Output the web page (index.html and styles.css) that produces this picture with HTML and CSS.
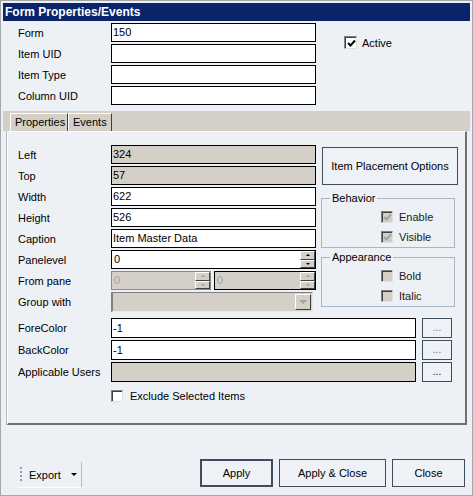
FILE: index.html
```html
<!DOCTYPE html>
<html lang="en">
<head>
    <meta charset="UTF-8">
    <title>Form Properties/Events</title>
    <link rel="stylesheet" href="styles.css">
</head>
<body>
    <div class="window">
        <div class="titlebar">Form Properties/Events</div>

        <div class="header">
            <div class="fields">
                <span>Form</span><div class="textbox">150</div>
                <span>Item UID</span><div class="textbox"></div>
                <span>Item Type</span><div class="textbox"></div>
                <span>Column UID</span><div class="textbox"></div>
            </div>
            <label class="check active-check">
                <span class="box">
                    <svg width="9" height="9" viewBox="0 0 9 9"><path d="M1 4 L3.5 6.5 L8 1.5" fill="none" stroke="#000" stroke-width="2"/></svg>
                </span>
                Active
            </label>
        </div>

        <div class="tab-strip">
            <span class="tab selected">Properties</span>
            <span class="tab">Events</span>
        </div>

        <div class="tab-panel">
            <div class="panel-top">
                <div class="fields props">
                    <span>Left</span><div class="textbox disabled">324</div>
                    <span>Top</span><div class="textbox disabled">57</div>
                    <span>Width</span><div class="textbox">622</div>
                    <span>Height</span><div class="textbox">526</div>
                    <span>Caption</span><div class="textbox">Item Master Data</div>
                    <span>Panelevel</span>
                    <div class="spin">
                        <span class="spin-value">0</span>
                        <span class="spin-buttons"><i class="up"></i><i class="down"></i></span>
                    </div>
                    <span>From pane</span>
                    <div class="pane-pair">
                        <div class="spin disabled small">
                            <span class="spin-value">0</span>
                            <span class="spin-buttons"><i class="up"></i><i class="down"></i></span>
                        </div>
                        <div class="spin disabled small dark">
                            <span class="spin-value">0</span>
                            <span class="spin-buttons"><i class="up"></i><i class="down"></i></span>
                        </div>
                    </div>
                    <span>Group with</span>
                    <div class="combo">
                        <span class="combo-value"></span>
                        <span class="combo-button"><i class="down"></i></span>
                    </div>
                </div>

                <div class="side">
                    <button class="btn placement">Item Placement Options</button>
                    <fieldset class="group behavior">
                        <legend>Behavior</legend>
                        <div class="check-list">
                            <label class="check off">
                                <span class="box">
                                    <svg width="9" height="9" viewBox="0 0 9 9"><path d="M1 4 L3.5 6.5 L8 1.5" fill="none" stroke="#a4a4a4" stroke-width="2"/></svg>
                                </span>
                                Enable
                            </label>
                            <label class="check off">
                                <span class="box">
                                    <svg width="9" height="9" viewBox="0 0 9 9"><path d="M1 4 L3.5 6.5 L8 1.5" fill="none" stroke="#a4a4a4" stroke-width="2"/></svg>
                                </span>
                                Visible
                            </label>
                        </div>
                    </fieldset>
                    <fieldset class="group appearance">
                        <legend>Appearance</legend>
                        <div class="check-list">
                            <label class="check off"><span class="box"></span>Bold</label>
                            <label class="check off"><span class="box"></span>Italic</label>
                        </div>
                    </fieldset>
                </div>
            </div>

            <div class="color-rows">
                <span>ForeColor</span><div class="textbox">-1</div><button class="btn dots">...</button>
                <span>BackColor</span><div class="textbox">-1</div><button class="btn dots">...</button>
                <span>Applicable Users</span><div class="textbox disabled"></div><button class="btn dots dark">...</button>
            </div>

            <label class="check exclude"><span class="box"></span>Exclude Selected Items</label>
        </div>

        <div class="footer">
            <div class="export">
                <span class="grip"></span>
                <span class="export-label">Export</span>
                <span class="caret"></span>
            </div>
            <button class="btn action default">Apply</button>
            <button class="btn action wide">Apply &amp; Close</button>
            <button class="btn action">Close</button>
        </div>
    </div>
</body>
</html>
```

FILE: styles.css
```css
body {
    margin: 0;
    font-family: "Liberation Sans", Arial, sans-serif;
    font-size: 11px;
    color: #000000;
    background: #ffffff;
}

.window {
    width: 473px;
    height: 496px;
    box-sizing: border-box;
    border: 1px solid #a4a8ac;
    padding: 2px;
    background-color: #edf1f5;
    display: flex;
    flex-direction: column;
}

.titlebar {
    height: 18px;
    line-height: 18px;
    padding-left: 2px;
    background-color: #0a246a; /* Classic navy caption */
    color: #ffffff;
    font-weight: bold;
    font-size: 12px;
}

/* Header fields */
.header {
    display: flex;
    margin-top: 2px;
    padding-left: 15px;
}

.fields {
    display: grid;
    grid-template-columns: 93px 205px;
    grid-auto-rows: 19px;
    row-gap: 2px;
    align-items: center;
}

.textbox {
    height: 19px;
    box-sizing: border-box;
    border: 1px solid #000000;
    background-color: #ffffff;
    padding-left: 1px;
    line-height: 17px;
    white-space: nowrap;
    overflow: hidden;
}

.textbox.disabled {
    background-color: #d4d0c8;
}

/* Checkboxes */
.check {
    display: flex;
    align-items: center;
    gap: 5px;
}

.check .box {
    width: 13px;
    height: 13px;
    box-sizing: border-box;
    border: 1px solid #808080;
    border-right-color: #e0e0e0;
    border-bottom-color: #e0e0e0;
    box-shadow: inset 1px 1px 0 #404040;
    background-color: #ffffff;
    display: flex;
    align-items: center;
    justify-content: center;
    padding: 1px 0 0 1px;
}

.check.off {
    color: #202020;
}

.check.off .box {
    background-color: #d4d0c8;
    width: 12px;
    height: 12px;
}

.active-check {
    align-self: flex-start;
    margin-top: 13px;
    margin-left: 28px;
}

/* Tabs */
.tab-strip {
    margin-top: 6px;
    height: 20px;
    box-sizing: border-box;
    padding-left: 7px;
    background-color: #d4d0c8;
    display: flex;
    align-items: flex-end;
}

.tab {
    height: 18px;
    line-height: 17px;
    box-sizing: border-box;
    padding: 0 4px;
    border-left: 1px solid #ffffff;
    border-top: 1px solid #ffffff;
    border-right: 1px solid #404040;
}

.tab.selected {
    width: 58px;
}

.tab-panel {
    height: 294px;
    margin: 0 3px 0 4px;
    box-sizing: border-box;
    border-left: 1px solid #ffffff;
    border-top: 1px solid #ffffff;
    border-right: 2px solid #707070;
    border-bottom: 2px solid #707070;
    box-shadow: -1px 0 0 #b8bcc0;
    padding: 13px 0 0 10px;
}

.panel-top {
    display: flex;
    gap: 5px;
}

.props {
    grid-template-rows: repeat(7, 19px) 20px;
}

/* Spinners */
.spin {
    height: 19px;
    box-sizing: border-box;
    border: 1px solid #000000;
    background-color: #ffffff;
    display: flex;
}

.spin-value {
    flex: 1;
    line-height: 17px;
    padding-left: 2px;
}

.spin-buttons {
    width: 15px;
    display: flex;
    flex-direction: column;
}

.spin-buttons i,
.combo-button {
    flex: 1;
    box-sizing: border-box;
    background-color: #d4d0c8;
    border: 1px solid #ffffff;
    border-right-color: #404040;
    border-bottom-color: #404040;
    display: flex;
    align-items: center;
    justify-content: center;
}

.spin-buttons i::after,
.combo-button i::after {
    content: "";
    display: block;
    width: 0;
    height: 0;
    border-left: 2px solid transparent;
    border-right: 2px solid transparent;
}

.spin-buttons .up::after {
    border-bottom: 2px solid #000000;
}

.spin-buttons .down::after {
    border-top: 2px solid #000000;
}

.spin.disabled {
    background-color: #d4d0c8;
    border-color: #8a8a8a;
    color: #a0a0a0;
}

.spin.dark {
    border-color: #000000;
}

.spin.disabled .up::after {
    border-bottom-color: #a0a0a0;
}

.spin.disabled .down::after {
    border-top-color: #a0a0a0;
}

.pane-pair {
    display: flex;
    gap: 3px;
}

.spin.small {
    width: 101px;
}

.spin.small.dark {
    width: 103px;
}

/* Combo */
.combo {
    width: 202px;
    height: 20px;
    box-sizing: border-box;
    border-left: 2px solid #808080;
    border-top: 1px solid #808080;
    border-right: 1px solid #e8e8e8;
    border-bottom: 1px solid #e8e8e8;
    background-color: #d4d0c8;
    display: flex;
    padding: 1px;
}

.combo-value {
    flex: 1;
}

.combo-button {
    flex: none;
    width: 16px;
}

.combo-button i {
    display: block;
}

.combo-button i::after {
    border-left-width: 4px;
    border-right-width: 4px;
    border-top: 4px solid #a0a0a0;
}

/* Right column */
.side {
    display: flex;
    flex-direction: column;
}

.btn {
    font-family: inherit;
    font-size: 11px;
    color: #000000;
    background-color: #eef2f6;
    border: 1px solid #3d4d5f;
    padding: 0;
    box-sizing: border-box;
}

.placement {
    width: 136px;
    height: 38px;
    margin-top: 2px;
    margin-left: 1px;
}

.group {
    width: 134px;
    margin: 0;
    padding: 0 0 0 8px;
    box-sizing: border-box;
    border: 1px solid #a9b6c3;
}

.group legend {
    padding: 0 2px;
    line-height: 13px;
}

.behavior {
    margin-top: 7px;
    height: 56px;
}

.appearance {
    margin-top: 3px;
    height: 56px;
}

.check-list {
    padding-left: 51px;
    margin-top: 2px;
}

.check-list .check {
    height: 20px;
    gap: 6px;
}

/* Colour rows */
.color-rows {
    display: grid;
    grid-template-columns: 93px 305px 36px;
    grid-auto-rows: 20px;
    row-gap: 2px;
    align-items: center;
    margin-top: 6px;
}

.color-rows .textbox {
    height: 20px;
    line-height: 18px;
}

.dots {
    width: 30px;
    height: 20px;
    margin-left: 6px;
    color: #707070;
    font-size: 10px;
    line-height: 14px;
}

.dots.dark {
    color: #000000;
}

.exclude {
    margin-top: 8px;
    margin-left: 93px;
    gap: 7px;
}

.exclude .box {
    width: 12px;
    height: 12px;
}

/* Footer */
.footer {
    margin-top: auto;
    display: flex;
    align-items: flex-end;
    padding: 0 5px 5px 15px;
}

.export {
    width: 64px;
    height: 26px;
    box-sizing: border-box;
    border-right: 1px solid #b8bcc0;
    border-bottom: 1px solid #ffffff;
    display: flex;
    align-items: center;
}

.grip {
    width: 2px;
    height: 15px;
    margin-left: 2px;
    background: repeating-linear-gradient(#9a9ea4 0 2px, transparent 2px 4px);
}

.export-label {
    margin-left: 7px;
}

.caret {
    margin-left: 10px;
    border-left: 3px solid transparent;
    border-right: 3px solid transparent;
    border-top: 3px solid #000000;
}

.action {
    width: 73px;
    height: 28px;
    margin-bottom: 1px;
    margin-left: 6px;
}

.action.default {
    margin-left: auto;
    border-width: 2px;
}

.action.wide {
    width: 107px;
}
```
